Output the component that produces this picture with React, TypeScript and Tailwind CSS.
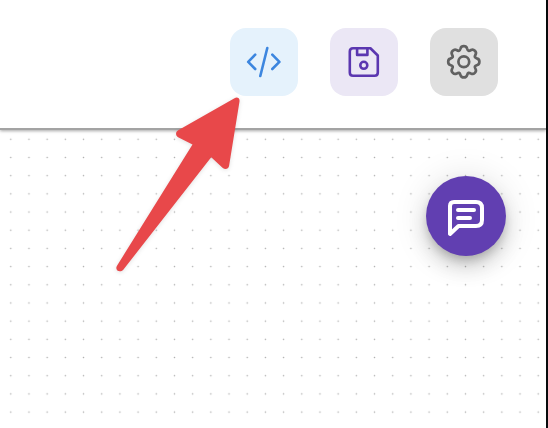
import type { ReactNode } from "react";

function ToolButton({ label, className, children }: { label: string; className: string; children: ReactNode }) {
  return (
    <button aria-label={label} className={`flex size-[68px] items-center justify-center rounded-2xl ${className}`}>
      {children}
    </button>
  );
}

function CodeIcon() {
  return (
    <svg width="68" height="68" viewBox="0 0 68 68" fill="none" stroke="currentColor" strokeWidth="2.6" strokeLinecap="round" strokeLinejoin="round">
      <path d="M25.2 26.7 18.2 33.9l7 7.1M42.3 26.7l7.1 7.2-7.1 7.1M37.3 20 30.3 48" />
    </svg>
  );
}

function SaveIcon() {
  return (
    <svg width="68" height="68" viewBox="0 0 68 68" fill="none" stroke="currentColor" strokeWidth="2.6" strokeLinejoin="round">
      <path d="M23 20.2H40.4L47.8 27.5V44.6Q47.8 47.8 44.6 47.8H23Q19.8 47.8 19.8 44.6V23.4Q19.8 20.2 23 20.2Z" />
      <path d="M27.1 20.2V26.9H37.4V20.2" />
      <circle cx="33.8" cy="37.3" r="3.5" strokeWidth="2.6" />
    </svg>
  );
}

function GearIcon() {
  return (
    <svg width="68" height="68" viewBox="-34 -34 68 68" fill="none" stroke="currentColor" strokeWidth="2.7" strokeLinejoin="round">
      <g transform="translate(-0.2 -0.2)">
        <circle r="5.4" />
        <path d="M-3.2-13.5C-2.4-16.3 2.4-16.3 3.2-13.5C4.1-10.6 5-10.5 7.3-11.8C9.9-13.2 13.2-9.9 11.8-7.3C10.5-5 10.6-4.1 13.5-3.2C16.3-2.4 16.3 2.4 13.5 3.2C10.6 4.1 10.5 5 11.8 7.3C13.2 9.9 9.9 13.2 7.3 11.8C5 10.5 4.1 10.6 3.2 13.5C2.4 16.3-2.4 16.3-3.2 13.5C-4.1 10.6-5 10.5-7.3 11.8C-9.9 13.2-13.2 9.9-11.8 7.3C-10.5 5-10.6 4.1-13.5 3.2C-16.3 2.4-16.3-2.4-13.5-3.2C-10.6-4.1-10.5-5-11.8-7.3C-13.2-9.9-9.9-13.2-7.3-11.8C-5-10.5-4.1-10.6-3.2-13.5Z" />
      </g>
    </svg>
  );
}

function ChatIcon() {
  return (
    <svg width="80" height="80" viewBox="0 0 80 80" fill="none" stroke="currentColor" strokeWidth="4" strokeLinecap="round" strokeLinejoin="round">
      <path d="M24 58V30Q24 26 28 26H50Q56 26 56 32V44Q56 50 50 50H32.5Z" />
      <path d="M32 34H48M32 42H44" />
    </svg>
  );
}

function PointerArrow() {
  return (
    <svg width="548" height="428" viewBox="0 0 548 428" className="pointer-events-none absolute inset-0 z-20 drop-shadow-[0_1px_2px_rgba(0,0,0,0.12)]">
      <path
        d="M234.5 98.2C237.3 96.6 240 98.3 239.5 101.4L229.1 165.7C228.5 169 225.2 170 222.8 167.9L211.2 157.2L123.3 269.7C119.6 273.6 114.4 270 117 265.7L192.5 144.6L178.1 137.2C175.3 135.7 175.4 131.8 178.2 130.2Z"
        fill="#e8484a"
      />
    </svg>
  );
}

export default function App() {
  return (
    <div className="relative flex h-[428px] w-[548px] overflow-hidden bg-white">
      <div className="flex min-w-0 flex-1 flex-col">
        <header className="z-10 flex h-[130px] shrink-0 items-start justify-end gap-8 border-b-2 border-[#a3a3a3] bg-white pt-7 pr-12 shadow-[0_1px_3px_rgba(0,0,0,0.35)]">
          <ToolButton label="View code" className="bg-[#e5f2fc] text-[#3c86df]">
            <CodeIcon />
          </ToolButton>
          <ToolButton label="Save" className="bg-[#ebe7f5] text-[#5b37b0]">
            <SaveIcon />
          </ToolButton>
          <ToolButton label="Settings" className="bg-[#e0e0e0] text-[#616161]">
            <GearIcon />
          </ToolButton>
        </header>
        <main className="flex flex-1 items-start justify-end bg-[radial-gradient(circle_at_center,#adadad_0.38px,transparent_1.1px)] bg-[length:18.19px_18.19px] bg-[position:1.7px_0.2px] pt-[46px] pr-10">
          <button
            aria-label="Comments"
            className="size-20 rounded-full bg-[#613fb1] text-white shadow-[0_6px_10px_-2px_rgba(0,0,0,0.2),0_12px_20px_rgba(0,0,0,0.14),0_2px_36px_rgba(0,0,0,0.12)]"
          >
            <ChatIcon />
          </button>
        </main>
      </div>
      <div className="w-0.5 shrink-0 bg-[#080a0c]" />
      <PointerArrow />
    </div>
  );
}
